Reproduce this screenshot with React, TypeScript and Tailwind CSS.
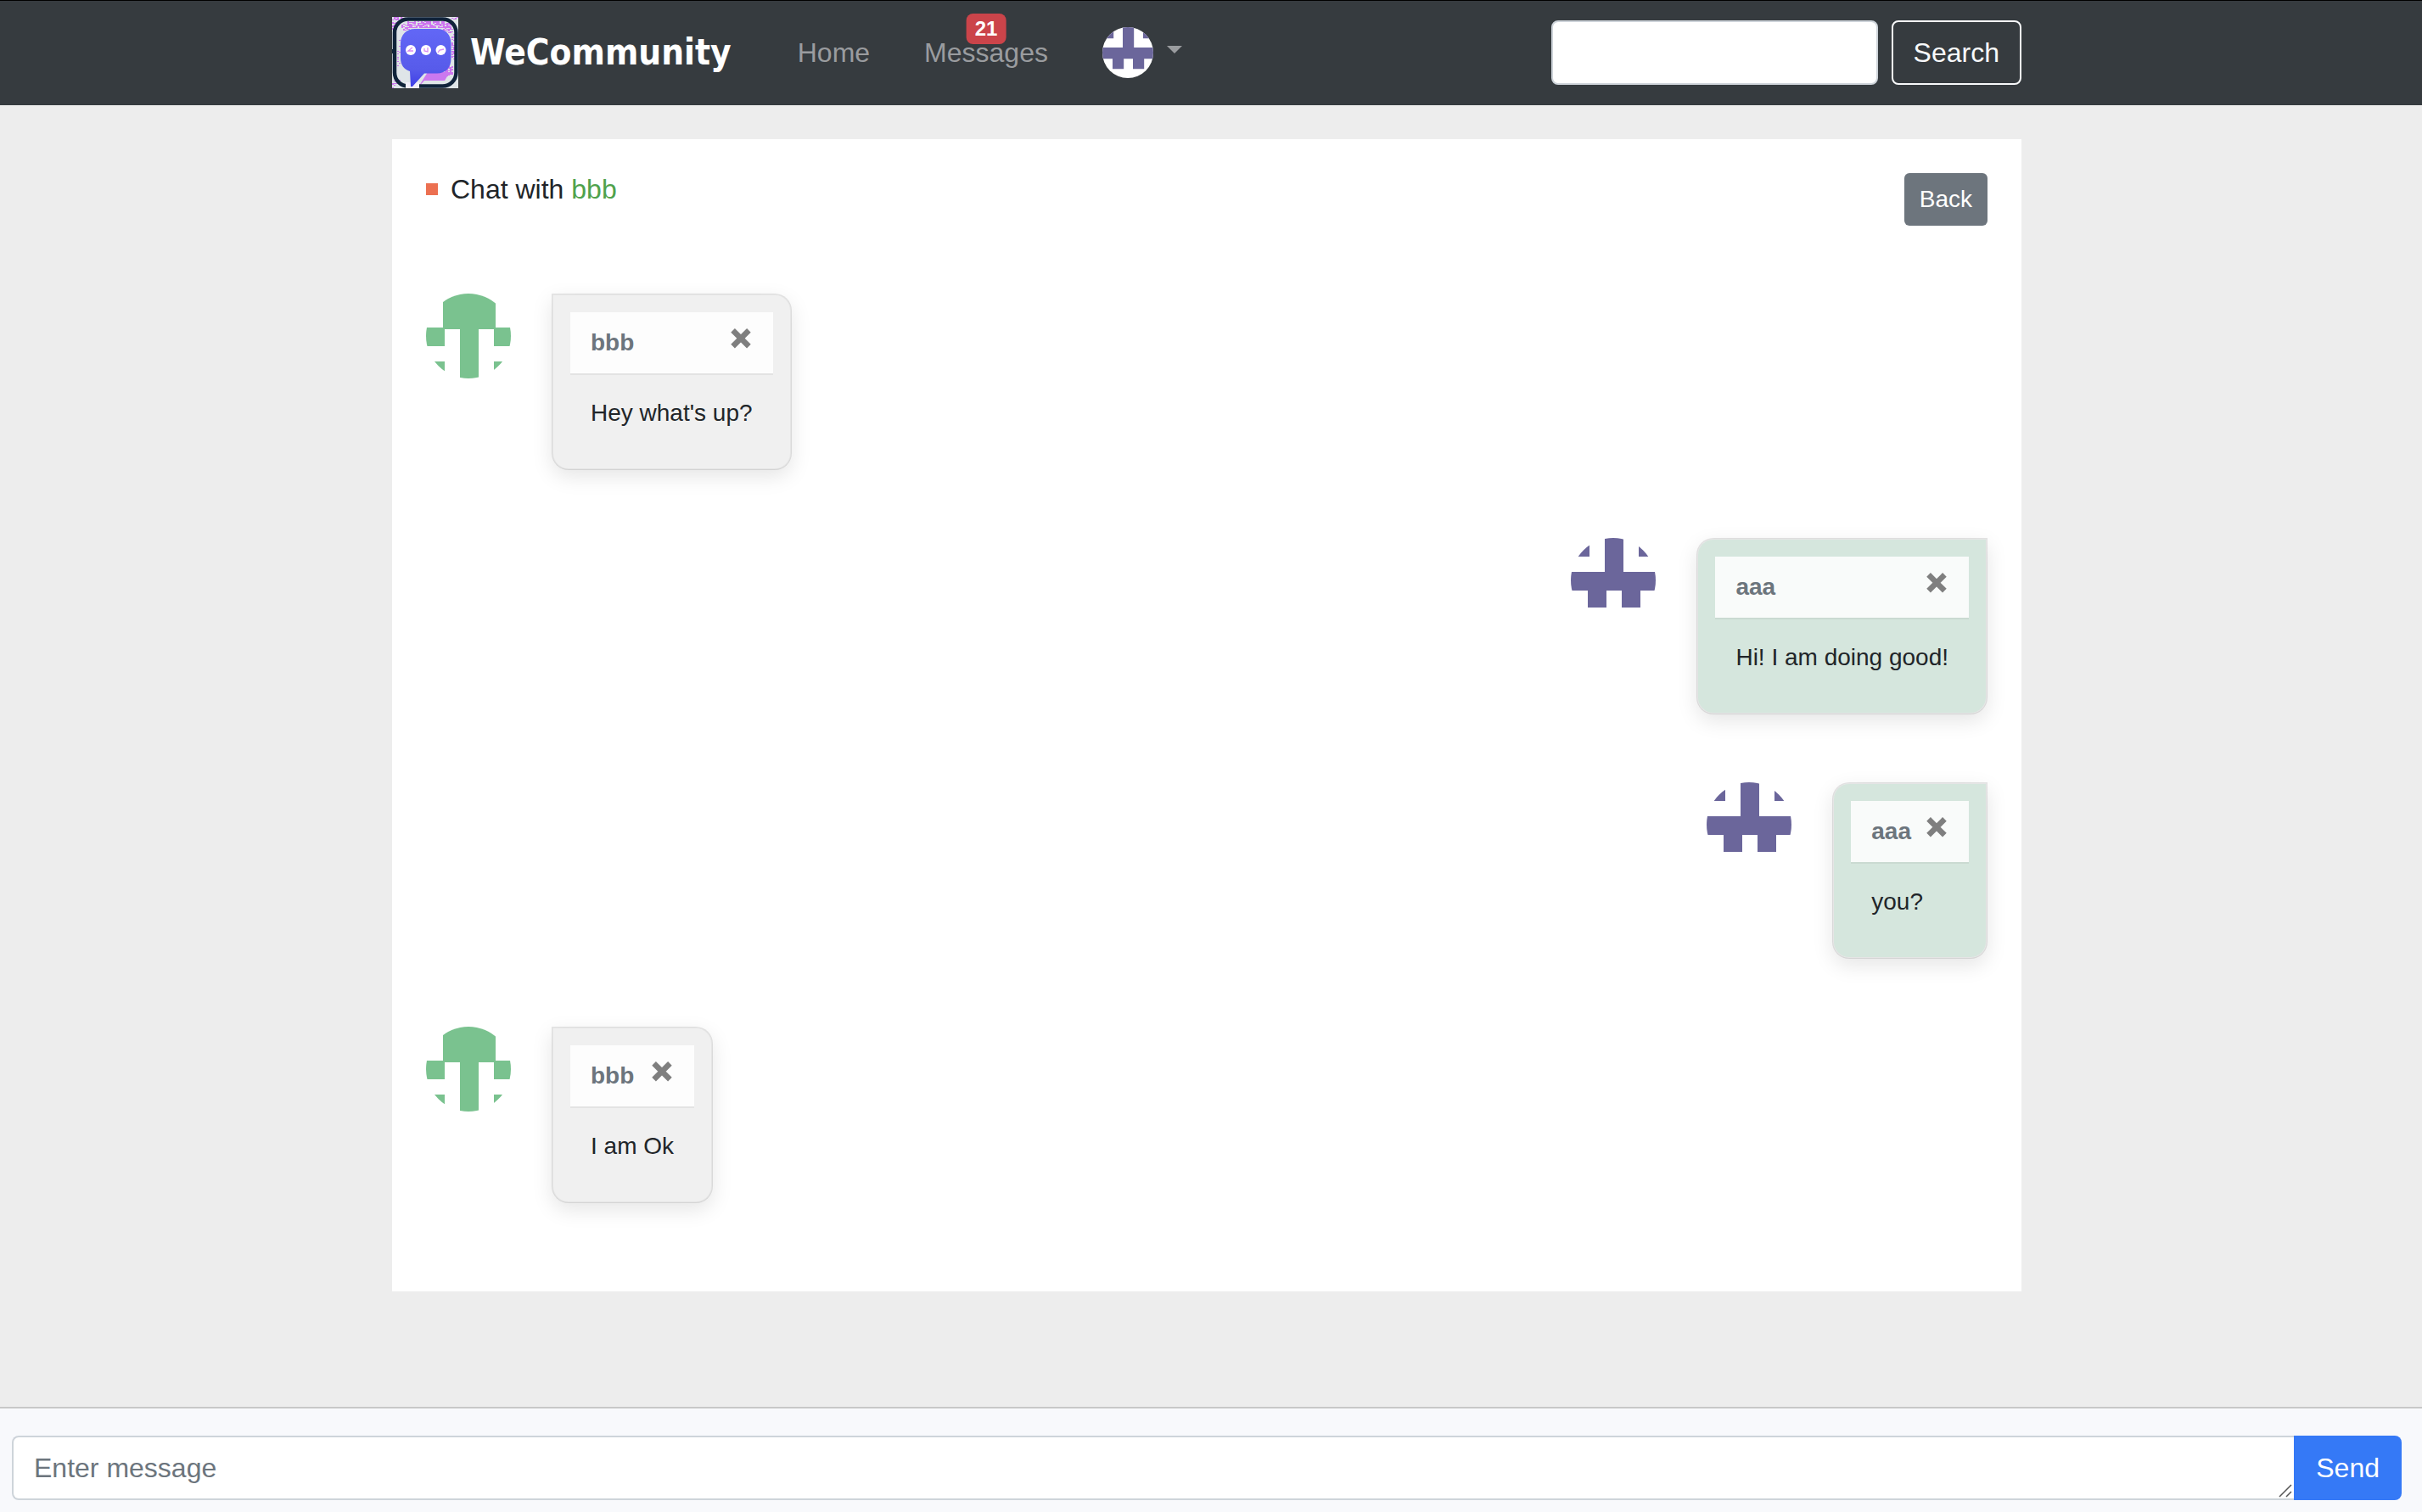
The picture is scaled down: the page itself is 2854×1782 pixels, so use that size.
import type { ReactNode } from 'react';

type Author = 'aaa' | 'bbb';

const messages: { id: number; author: Author; text: string }[] = [
  { id: 1, author: 'bbb', text: "Hey what's up?" },
  { id: 2, author: 'aaa', text: 'Hi! I am doing good!' },
  { id: 3, author: 'aaa', text: 'you?' },
  { id: 4, author: 'bbb', text: 'I am Ok' },
];

const identicons: Record<Author, { fill: string; path: string }> = {
  aaa: {
    fill: '#6b669b',
    path: 'M0 0H22V22H0ZM80 0H100V22H80ZM40 0H62V40H100V62H82V82H60V62H42V82H20V62H0V40H40Z',
  },
  bbb: {
    fill: '#7ac28f',
    path: 'M20 0H82V40H100V62H80V42H62V100H40V42H22V62H0V40H20ZM0 80H22V100H0ZM80 80H100V100H80Z',
  },
};

function Avatar({ author, className }: { author: Author; className: string }) {
  const icon = identicons[author];
  return (
    <svg viewBox="0 0 100 100" role="img" aria-label={author} className={`shrink-0 rounded-full bg-white ${className}`}>
      <path d={icon.path} fill={icon.fill} />
    </svg>
  );
}

// Speckle bands around the bubble: x, y, width, height, share of filled cells.
const speckleBands = [
  [0, 0, 14, 5, 0.6],
  [0, 5, 5, 10, 0.6],
  [18, 5, 44, 8, 0.72],
  [11, 8, 12, 8, 0.5],
  [60, 7, 12, 12, 0.6],
  [70, 20, 3, 30, 0.5],
  [6, 24, 3, 34, 0.12],
  [62, 58, 10, 12, 0.7],
  [0, 74, 9, 10, 0.25],
  [70, 0, 8, 3, 0.25],
];

function speckles() {
  const cells: ReactNode[] = [];
  let seed = 17;
  speckleBands.forEach(([x, y, w, h, share], band) => {
    for (let cy = y; cy < y + h; cy += 1) {
      for (let cx = x; cx < x + w; cx += 2) {
        seed = (seed * 1103515245 + 12345) % 2147483648;
        if (seed / 2147483648 < share) {
          cells.push(<rect key={`${band}-${cx}-${cy}`} x={cx} y={cy} width="2" height="1" fill="#ce75f0" />);
        }
      }
    }
  });
  return cells;
}

function Logo() {
  return (
    <svg viewBox="0 0 78 84" aria-hidden="true" className="h-[84px] w-[78px] shrink-0">
      <defs>
        <linearGradient id="bubble" x1="0" y1="0" x2="0" y2="1">
          <stop offset="0" stopColor="#6267f6" />
          <stop offset="0.7" stopColor="#575bea" />
          <stop offset="1" stopColor="#3f3fe6" />
        </linearGradient>
      </defs>
      <rect width="78" height="84" fill="#dfe5e8" />
      {speckles()}
      <path d="M30 84 L42 65 H68 L62 75 H38 Z" fill="#cb78ef" />
      <rect x="3" y="2.500" width="72.500" height="79" rx="16" fill="none" stroke="#10233a" strokeWidth="4.500" />
      <rect x="0" y="38" width="2" height="5" fill="#10233a" />
      <path d="M16 77H32V84H16Z" fill="#f1eef8" />
      <path
        d="M27 14H53C63 14 69.500 21 69.500 31V49C69.500 60 63 66.500 53 66.500H38L24 82H22L21 64C14 62 10 56 10 49V31C10 21 17 14 27 14Z"
        fill="url(#bubble)"
      />
      <g fill="#fff">
        <circle cx="22" cy="39" r="6" />
        <circle cx="40" cy="39" r="6" />
        <circle cx="57.500" cy="39" r="6" />
      </g>
      <g fill="none" stroke="#d98bf2" strokeWidth="1.300">
        <path d="M24 36L19 40H25" />
        <path d="M38 37V40L42 41V36" />
        <path d="M54 42L56 39L61 38" />
      </g>
    </svg>
  );
}

function Navbar() {
  return (
    <header className="bg-[#363b3f] pr-[10px] shadow-[inset_0_1px_0_#000]">
      <nav className="mx-auto flex h-[124px] w-full max-w-[1920px] items-center">
        <a href="#home" className="flex items-center gap-[14px]">
          <Logo />
          <span className="font-['DejaVu_Sans_Condensed','DejaVu_Sans',sans-serif] text-[42px] leading-[48px] font-bold text-white">
            WeCommunity
          </span>
        </a>
        <div className="ml-[78px] flex items-center gap-16 text-[#9a9c9f]">
          <a href="#home">Home</a>
          <a href="#messages" className="relative">
            Messages
            <span className="absolute bottom-[34px] left-1/2 -translate-x-1/2 rounded-lg bg-[#cb444a] px-[10px] text-2xl leading-9 font-bold text-white">
              21
            </span>
          </a>
          <button type="button" aria-label="Account menu" className="flex items-center gap-4">
            <Avatar author="aaa" className="size-[60px]" />
            <svg viewBox="0 0 18 9" aria-hidden="true" className="mb-2 h-[9px] w-[18px]">
              <path d="M0 0H18L9 9Z" fill="currentColor" />
            </svg>
          </button>
        </div>
        <form className="ml-auto flex gap-4" onSubmit={(e) => e.preventDefault()}>
          <input
            type="search"
            aria-label="Search"
            className="h-[76px] w-[385px] rounded-lg border-2 border-[#ced4da] bg-white px-6 text-[#212529]"
          />
          <button type="submit" className="rounded-lg border-2 border-[#f8f9fa] px-6 text-[#f8f9fa]">
            Search
          </button>
        </form>
      </nav>
    </header>
  );
}

function Message({ author, text }: { author: Author; text: string }) {
  const mine = author === 'aaa';
  return (
    <li className={`flex items-start gap-12 ${mine ? 'justify-end' : ''}`}>
      <Avatar author={author} className="size-[100px]" />
      <article
        className={`rounded-[20px] border-2 border-black/10 bg-clip-padding p-5 text-[28px] leading-[42px] shadow-[0_8px_24px_rgba(0,0,0,0.1)] ${
          mine ? 'rounded-tr-none bg-[#d5e6dd]' : 'rounded-tl-none bg-[#f0f0f0]'
        }`}
      >
        <header className="flex items-center border-b-2 border-black/5 bg-white/85 bg-clip-padding px-6 py-2">
          <strong className="mr-auto text-[#6c757d]">{author}</strong>
          <button type="button" aria-label="Delete message" className="mb-2 ml-4">
            <svg viewBox="0 0 28 48" aria-hidden="true" className="h-12 w-7">
              <path d="M4.600 13.400L23.400 32.200M23.400 13.400L4.600 32.200" stroke="#7f7f7f" strokeWidth="6.600" fill="none" />
            </svg>
          </button>
        </header>
        <p className="p-6">{text}</p>
      </article>
    </li>
  );
}

export default function App() {
  return (
    <div className="flex min-h-screen flex-col bg-[#ededed] font-['Liberation_Sans',Arial,sans-serif] text-[32px] leading-[48px] text-[#212529]">
      <Navbar />
      <div className="grow pt-10 pr-[10px]">
        <main className="mx-auto w-full max-w-[1920px] bg-white px-10 pt-10 pb-[104px]">
          <div className="flex items-start justify-between pb-20">
            <h1 className="flex items-center leading-[38px]">
              <span className="mr-[15px] size-[14px] bg-[#ec7051]" />
              <span>
                Chat with{' '}
                <a href="#bbb" className="text-[#4fa24c]">
                  bbb
                </a>
              </span>
            </h1>
            <button type="button" className="rounded-md bg-[#6d757d] px-[18px] text-[28px] leading-[62px] text-white">
              Back
            </button>
          </div>
          <ul className="flex flex-col gap-20">
            {messages.map((m) => (
              <Message key={m.id} author={m.author} text={m.text} />
            ))}
          </ul>
        </main>
      </div>
      <form
        className="flex border-t-2 border-[#c8c8c8] bg-[#f8f9fc] pt-8 pr-6 pb-[14px] pl-[14px]"
        onSubmit={(e) => e.preventDefault()}
      >
        <div className="relative flex grow">
          <textarea
            rows={1}
            aria-label="Enter message"
            placeholder="Enter message"
            className="h-[76px] grow resize-none overflow-hidden rounded-l-lg border-2 border-r-0 border-[#ced4da] bg-white px-6 py-3 placeholder:text-[#6c757d]"
          />
          <svg viewBox="0 0 16 16" aria-hidden="true" className="absolute right-[2px] bottom-[3px] size-4">
            <path d="M1 15L15 1M9 15L15 9" stroke="#555" strokeWidth="1.500" fill="none" />
          </svg>
        </div>
        <button type="submit" className="rounded-r-lg bg-[#3579f6] px-[26px] text-white">
          Send
        </button>
      </form>
    </div>
  );
}
